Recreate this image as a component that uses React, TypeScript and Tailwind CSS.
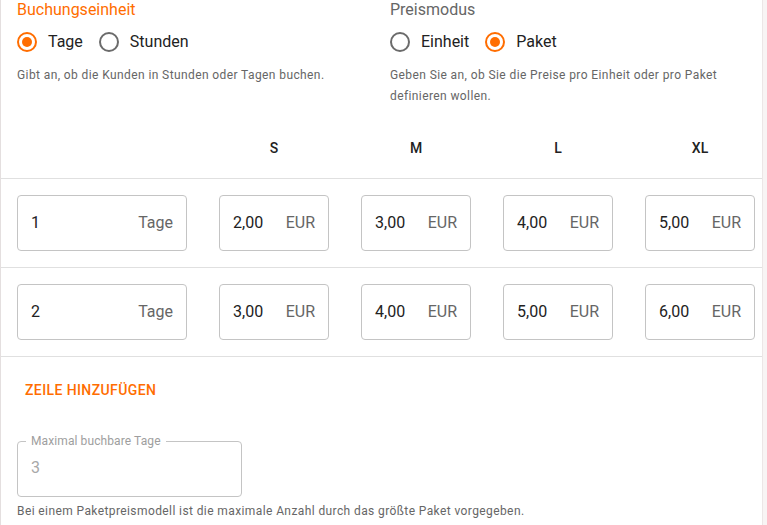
import React from "react";

const ORANGE = "text-[#ff6d00]";

function Radio({ checked }: { checked: boolean }) {
  return (
    <span className="w-[42px] h-[42px] flex items-center justify-center shrink-0">
      <svg width="24" height="24" viewBox="0 0 24 24">
        <circle
          cx="12"
          cy="12"
          r="9"
          fill="none"
          stroke={checked ? "#ff6d00" : "#6b6b6b"}
          strokeWidth="2"
        />
        {checked && <circle cx="12" cy="12" r="5" fill="#ff6d00" />}
      </svg>
    </span>
  );
}

function Option({ label, checked }: { label: string; checked: boolean }) {
  return (
    <label className="flex items-center -ml-[11px] mr-4">
      <Radio checked={checked} />
      <span className="text-[16px] leading-6 text-[#222]">{label}</span>
    </label>
  );
}

function Field({
  value,
  unit,
  wide,
}: {
  value: string;
  unit: string;
  wide?: boolean;
}) {
  return (
    <div
      className={`${
        wide ? "w-[170px]" : "w-[110px]"
      } h-[56px] border border-[#c4c4c4] rounded-[4px] flex items-center px-[13px]`}
    >
      <span className="flex-1 text-[16px] text-[#222] leading-6">{value}</span>
      <span className="ml-2 text-[16px] text-[#666] leading-6">{unit}</span>
    </div>
  );
}

const rows = [
  { n: "1", prices: ["2,00", "3,00", "4,00", "5,00"] },
  { n: "2", prices: ["3,00", "4,00", "5,00", "6,00"] },
];

export default function App() {
  return (
    <div className="flex h-[525px] w-full overflow-hidden bg-[#f8f4f4] font-['Roboto',sans-serif]">
      <div className="w-px bg-[#e4dfdf] shrink-0" />
      <div className="w-[762px] shrink-0 bg-white border-r border-[#ece6e6] overflow-hidden">
        {/* Top section */}
        <div className="flex pl-4">
          <div className="w-[373px]">
            <div className={`text-[16px] leading-5 ${ORANGE}`}>Buchungseinheit</div>
            <div className="flex items-center mt-px">
              <Option label="Tage" checked />
              <Option label="Stunden" checked={false} />
            </div>
            <p className="mt-[2px] text-[12px] leading-[21px] tracking-[0.4px] text-[#666]">
              Gibt an, ob die Kunden in Stunden oder Tagen buchen.
            </p>
          </div>
          <div className="flex-1 pr-4">
            <div className="text-[16px] leading-5 text-[#666]">Preismodus</div>
            <div className="flex items-center mt-px">
              <Option label="Einheit" checked={false} />
              <Option label="Paket" checked />
            </div>
            <p className="mt-[2px] text-[12px] leading-[21px] tracking-[0.4px] text-[#666] w-[345px]">
              Geben Sie an, ob Sie die Preise pro Einheit oder pro Paket definieren wollen.
            </p>
          </div>
        </div>

        {/* Header row */}
        <div className="mt-[15px] flex border-b border-[#e0e0e0] pl-4">
          <div className="w-[170px]" />
          {["S", "M", "L", "XL"].map((s) => (
            <div
              key={s}
              className="w-[110px] ml-[32px] pt-[14px] pb-[18px] text-center text-[14px] leading-6 font-medium text-[#222]"
            >
              {s}
            </div>
          ))}
        </div>

        {/* Data rows */}
        {rows.map((r) => (
          <div key={r.n} className="flex border-b border-[#e0e0e0] pl-4 py-4">
            <Field value={r.n} unit="Tage" wide />
            {r.prices.map((p, i) => (
              <div key={i} className="ml-[32px]">
                <Field value={p} unit="EUR" />
              </div>
            ))}
          </div>
        ))}

        {/* Add row button */}
        <div className="pl-4 mt-[15px]">
          <button className={`h-9 px-2 text-[14px] font-medium uppercase tracking-[0.4px] ${ORANGE}`}>
            Zeile hinzufügen
          </button>
        </div>

        {/* Max field */}
        <div className="pl-4 mt-[33px]">
          <div className="relative w-[225px] h-[56px] border border-[#c4c4c4] rounded-[4px] flex items-center px-[13px]">
            <span className="absolute left-[8px] -top-[9px] bg-white px-[5px] text-[12px] leading-4 text-[#9e9e9e] tracking-[0.1px]">
              Maximal buchbare Tage
            </span>
            <span className="text-[16px] leading-6 text-[#a8a8a8] mt-[-2px]">3</span>
          </div>
          <p className="mt-[4px] text-[12px] leading-5 tracking-[0.4px] text-[#666]">
            Bei einem Paketpreismodell ist die maximale Anzahl durch das größte Paket vorgegeben.
          </p>
        </div>
      </div>
      <div className="flex-1" />
    </div>
  );
}
